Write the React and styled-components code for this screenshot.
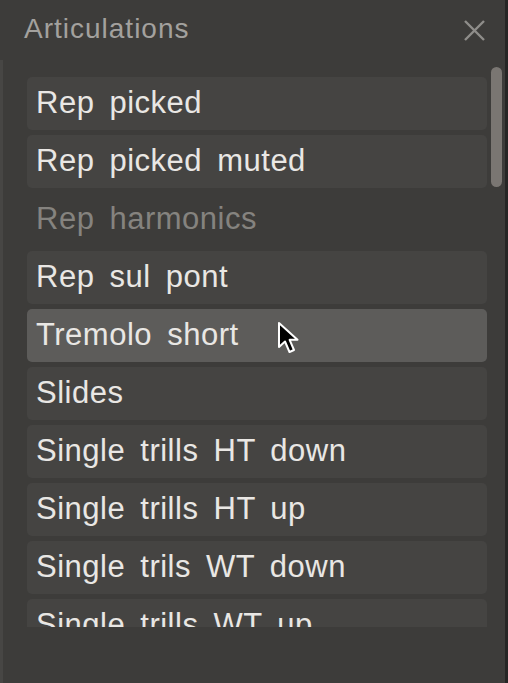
import React from "react";
import styled, { createGlobalStyle } from "styled-components";

const Global = createGlobalStyle`
  html, body { margin: 0; padding: 0; background: #3d3c3a; }
  body { font-family: "Liberation Sans", Arial, sans-serif; }
`;

const Panel = styled.div`
  position: relative;
  width: 508px;
  height: 683px;
  background: #3d3c3a;
  display: flex;
  flex-direction: column;
  overflow: hidden;
  border-right: 3px solid #262625;
  box-sizing: border-box;
`;

const Header = styled.div`
  height: 60px;
  flex: none;
  display: flex;
  align-items: center;
  justify-content: space-between;
  padding: 0 17px 0 24px;
`;

const Title = styled.div`
  font-size: 28px;
  letter-spacing: 1px;
  color: #a3a19e;
  margin-top: -2px;
`;

const Close = styled.button`
  width: 28px;
  height: 28px;
  border: 0;
  padding: 0;
  background: transparent;
  display: flex;
  align-items: center;
  justify-content: center;
  margin-top: 1px;
`;

const Body = styled.div`
  flex: 1;
  position: relative;
  border-left: 3px solid #474644;
  display: flex;
  flex-direction: column;
`;

const Viewport = styled.div`
  height: 567px;
  overflow: hidden;
  padding: 17px 18px 0 24px;
  box-sizing: border-box;
`;

const List = styled.div`
  display: flex;
  flex-direction: column;
  gap: 5px;
`;

const Row = styled.div`
  position: relative;
  height: 53px;
  flex: none;
  border-radius: 5px;
  background: ${(p) => (p.$active ? "#5d5c5a" : p.$disabled ? "transparent" : "#454442")};
  color: ${(p) => (p.$disabled ? "#85837f" : "#e9e7e4")};
  font-size: 31px;
  letter-spacing: 0.5px;
  word-spacing: 6px;
  line-height: 51px;
  padding-left: 9px;
  white-space: nowrap;
`;

const Scrollbar = styled.div`
  position: absolute;
  left: 488px;
  top: 7px;
  width: 11px;
  height: 120px;
  border-radius: 6px;
  background: #7a7672;
`;

const Cursor = styled.svg`
  position: absolute;
  left: 250px;
  top: 12px;
`;

const items = [
  { t: "Rep picked" },
  { t: "Rep picked muted" },
  { t: "Rep harmonics", disabled: true },
  { t: "Rep sul pont" },
  { t: "Tremolo short", active: true },
  { t: "Slides" },
  { t: "Single trills HT down" },
  { t: "Single trills HT up" },
  { t: "Single trils WT down" },
  { t: "Single trills WT up" },
];

export default function App() {
  return (
    <>
      <Global />
      <Panel>
        <Header>
          <Title>Articulations</Title>
          <Close aria-label="Close">
            <svg width="23" height="23" viewBox="0 0 23 23">
              <path d="M2 2 L21 21 M21 2 L2 21" stroke="#8f8d8a" strokeWidth="2.4" fill="none" />
            </svg>
          </Close>
        </Header>
        <Body>
          <Viewport>
            <List>
              {items.map((it) => (
                <Row key={it.t} $active={it.active} $disabled={it.disabled}>
                  {it.t}
                  {it.active && (
                    <Cursor width="24" height="34" viewBox="0 0 24 34">
                      <path
                        d="M2 2 L2 26 L8 20.5 L12.5 31 L17 29 L12.6 18.8 L20.5 18.8 Z"
                        fill="#000"
                        stroke="#fff"
                        strokeWidth="2"
                        strokeLinejoin="round"
                      />
                    </Cursor>
                  )}
                </Row>
              ))}
            </List>
          </Viewport>
          <Scrollbar />
        </Body>
      </Panel>
    </>
  );
}
